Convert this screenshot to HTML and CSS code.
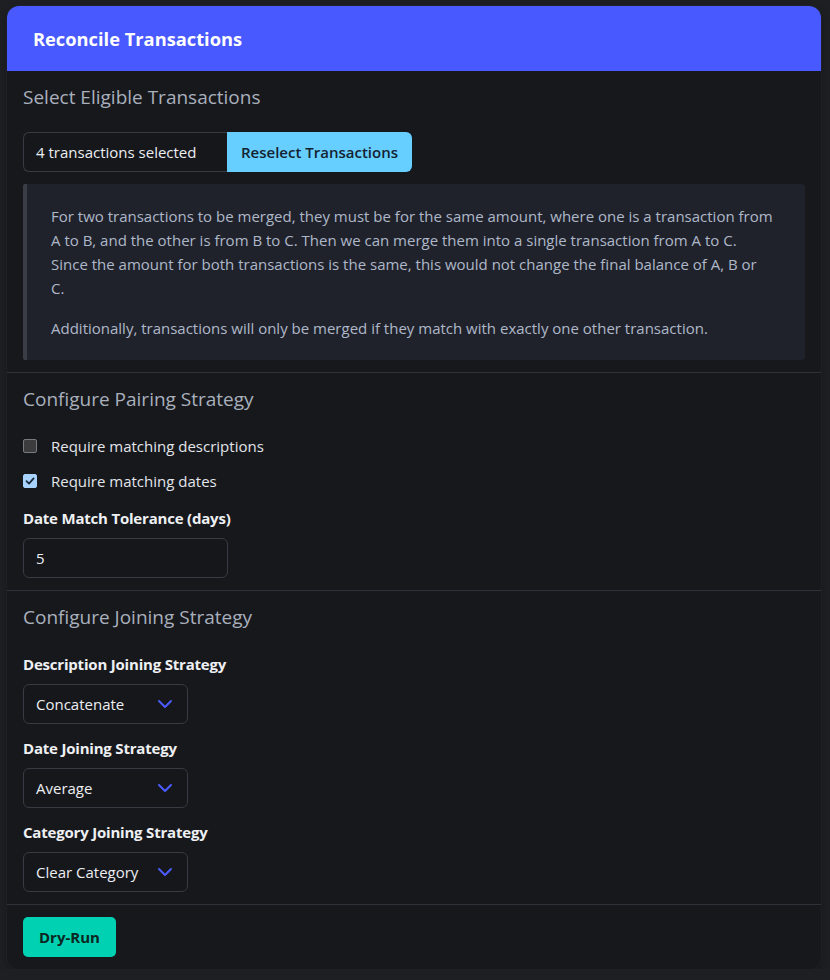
FILE: index.html
```html
<!DOCTYPE html>
<html lang="en">
<head>
<meta charset="utf-8">
<title>Reconcile Transactions</title>
<link rel="stylesheet" href="styles.css">
</head>
<body>
<div class="card">
  <div class="card-header">Reconcile Transactions</div>

  <section class="section">
    <h2 class="section-title">Select Eligible Transactions</h2>
    <div class="input-group">
      <div class="group-text">4 transactions selected</div>
      <button class="btn btn-info">Reselect Transactions</button>
    </div>
    <div class="notice">
      <p class="lines">For two transactions to be merged, they must be for the same amount, where one is a transaction from<br>A to B, and the other is from B to C. Then we can merge them into a single transaction from A to C.<br>Since the amount for both transactions is the same, this would not change the final balance of A, B or<br>C.</p>
      <p>Additionally, transactions will only be merged if they match with exactly one other transaction.</p>
    </div>
  </section>

  <section class="section">
    <h2 class="section-title">Configure Pairing Strategy</h2>
    <label class="check-row"><span class="checkbox"></span><span>Require matching descriptions</span></label>
    <label class="check-row"><span class="checkbox checked"><svg viewBox="0 0 14 14" width="14" height="14"><path d="M3.5 7.2 L6 9.6 L10.6 4.4" fill="none" stroke="#1b2a3a" stroke-width="1.8" stroke-linecap="round" stroke-linejoin="round"/></svg></span><span>Require matching dates</span></label>
    <div class="field field-first">
      <div class="field-label">Date Match Tolerance (days)</div>
      <div class="text-input">5</div>
    </div>
  </section>

  <section class="section">
    <h2 class="section-title">Configure Joining Strategy</h2>
    <div class="field">
      <div class="field-label">Description Joining Strategy</div>
      <div class="select"><span>Concatenate</span><svg class="chev" viewBox="0 0 16 10" width="16" height="10"><path d="M2 2 L8 8 L14 2" fill="none" stroke="#4a5cff" stroke-width="2" stroke-linecap="round" stroke-linejoin="round"/></svg></div>
    </div>
    <div class="field">
      <div class="field-label">Date Joining Strategy</div>
      <div class="select"><span>Average</span><svg class="chev" viewBox="0 0 16 10" width="16" height="10"><path d="M2 2 L8 8 L14 2" fill="none" stroke="#4a5cff" stroke-width="2" stroke-linecap="round" stroke-linejoin="round"/></svg></div>
    </div>
    <div class="field">
      <div class="field-label">Category Joining Strategy</div>
      <div class="select"><span>Clear Category</span><svg class="chev" viewBox="0 0 16 10" width="16" height="10"><path d="M2 2 L8 8 L14 2" fill="none" stroke="#4a5cff" stroke-width="2" stroke-linecap="round" stroke-linejoin="round"/></svg></div>
    </div>
  </section>

  <section class="section section-footer">
    <button class="btn btn-primary">Dry-Run</button>
  </section>
</div>
</body>
</html>
```

FILE: styles.css
```css
* { box-sizing: border-box; }

html, body {
  margin: 0;
  background: #1e1f23;
}

body {
  padding: 6px 9px 0 7px;
  font-family: "Open Sans", "Noto Sans", sans-serif;
  font-size: 15px;
  color: #e4e6ea;
}

.card {
  background: #17181c;
  border-radius: 12px;
  overflow: hidden;
  box-shadow: 0 3px 8px rgba(0,0,0,0.3), 0 0 0 1px #25262b;
}

.card-header {
  background: #4859ff;
  color: #ffffff;
  height: 65px;
  display: flex;
  align-items: center;
  padding: 0 26px;
  font-size: 18.3px;
  font-weight: 700;
}

.section {
  padding: 12px 16px;
  border-top: 1px solid #2f3039;
}

.card-header + .section { border-top: none; }

.section-title {
  margin: 0 0 21px 0;
  font-size: 19px;
  line-height: 28px;
  font-weight: 400;
  color: #a9b0bc;
}

.input-group {
  display: flex;
  height: 40px;
  width: 389px;
}

.group-text {
  width: 204px;
  flex: none;
  border: 1px solid #393a43;
  border-right: none;
  border-radius: 6px 0 0 6px;
  padding: 0 12px;
  display: flex;
  align-items: center;
  color: #eceef2;
  background: #16171b;
  white-space: nowrap;
}

.btn {
  font-family: inherit;
  font-size: 15px;
  font-weight: 600;
  border: none;
  cursor: pointer;
  height: 40px;
  padding: 0 16px;
  white-space: nowrap;
}

.btn-info {
  flex: 1;
  padding: 0 8px;
  background: #66cfff;
  color: #142230;
  border-radius: 0 6px 6px 0;
}

.btn-primary {
  background: #00d1b2;
  color: #0b2621;
  border-radius: 5px;
  padding: 0 16px;
  font-weight: 700;
}

.notice {
  margin-top: 12px;
  background: #20222b;
  border-left: 4px solid #3a3c46;
  border-radius: 2px 4px 4px 2px;
  padding: 20px 24px;
  color: #aeb8c9;
  line-height: 24px;
}

.notice p { margin: 0; }
.notice p + p { margin-top: 16px; }
.notice .lines { white-space: nowrap; }

.check-row {
  display: flex;
  align-items: center;
  height: 24px;
  gap: 14px;
  color: #e2e5ea;
}

.check-row + .check-row { margin-top: 11px; }

.checkbox {
  width: 14px;
  height: 14px;
  border-radius: 2px;
  background: #3c3c3e;
  border: 1px solid #7a7a7c;
  display: flex;
  align-items: center;
  justify-content: center;
  flex: none;
}

.checkbox.checked {
  background: #a8d3ff;
  border-color: #a8d3ff;
}

.checkbox svg { display: block; margin: -1px; }

.field + .field { margin-top: 12px; }
.field-first { margin-top: 13px; }

.field-label {
  font-weight: 700;
  letter-spacing: -0.2px;
  line-height: 24px;
  margin-bottom: 8px;
  color: #eef0f3;
}

.text-input {
  width: 205px;
  height: 40px;
  border: 1px solid #393a43;
  border-radius: 6px;
  padding: 0 12px;
  display: flex;
  align-items: center;
  background: #16171b;
  color: #eceef2;
}

.select {
  width: 165px;
  height: 40px;
  border: 1px solid #393a43;
  border-radius: 6px;
  padding: 0 14px 0 12px;
  display: flex;
  align-items: center;
  justify-content: space-between;
  background: #16171b;
  color: #eceef2;
}

.chev { display: block; flex: none; }

.section-footer { padding-top: 12px; padding-bottom: 12px; }
```
